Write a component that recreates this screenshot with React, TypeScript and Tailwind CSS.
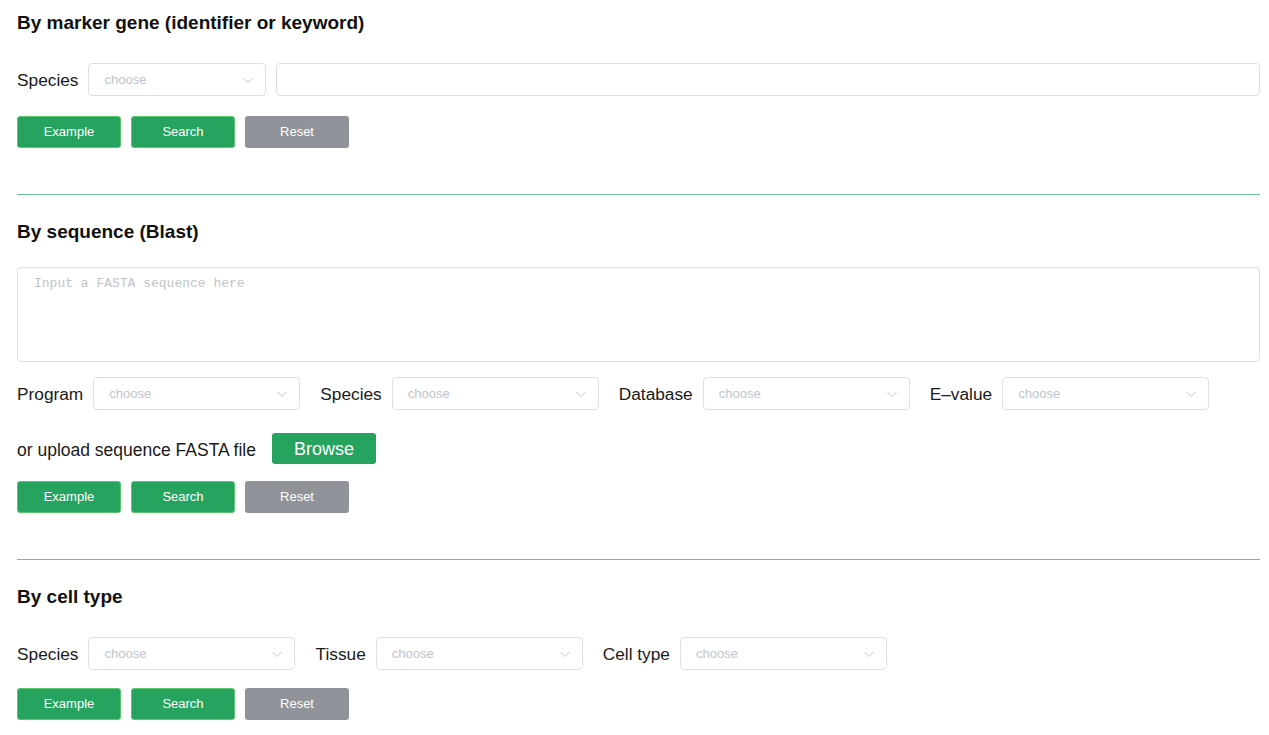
import React from "react";

const Chevron = () => (
  <svg width="12" height="12" viewBox="0 0 12 12" className="text-[#c0c4cc]">
    <path d="M1.5 4 L6 8.5 L10.5 4" fill="none" stroke="currentColor" strokeWidth="1" />
  </svg>
);

const Select = ({ width }: { width: string }) => (
  <div
    className={`${width} h-[33px] flex items-center justify-between border border-[#dcdfe6] rounded-[4px] pl-[15px] pr-[11px] bg-white`}
  >
    <span className="text-[13px] leading-[16px] text-[#c0c4cc]">choose</span>
    <Chevron />
  </div>
);

const Field = ({ label, width = "w-[207px]" }: { label: string; width?: string }) => (
  <div className="flex items-center gap-[10px]">
    <span className="text-[17.3px] leading-[24px] text-[#1a1a1a]">{label}</span>
    <Select width={width} />
  </div>
);

const Buttons = () => (
  <div className="flex gap-[10px]">
    <button className="w-[104px] h-[32px] rounded-[3px] bg-[#26a45f] border border-[#5cc46a] text-white text-[13px]">
      Example
    </button>
    <button className="w-[104px] h-[32px] rounded-[3px] bg-[#26a45f] border border-[#5cc46a] text-white text-[13px]">
      Search
    </button>
    <button className="w-[104px] h-[32px] rounded-[3px] bg-[#909399] text-white text-[13px]">
      Reset
    </button>
  </div>
);

const Heading = ({ children }: { children: React.ReactNode }) => (
  <h2 className="text-[19px] leading-[25px] font-bold text-[#111]">{children}</h2>
);

export default function App() {
  return (
    <div className="bg-white min-h-screen pl-[17px] w-[1260px] font-['Liberation_Sans',Arial,sans-serif]">
      <div className="pt-[10px]">
        <Heading>By marker gene (identifier or keyword)</Heading>
        <div className="mt-[28px] flex items-center gap-[10px]">
          <span className="text-[17.3px] leading-[24px] text-[#1a1a1a]">Species</span>
          <Select width="w-[178px]" />
          <div className="flex-1 h-[33px] border border-[#dcdfe6] rounded-[4px]" />
        </div>
        <div className="mt-[20px]">
          <Buttons />
        </div>
      </div>

      <div className="mt-[46px] border-t border-[#6cc394]" />

      <div className="pt-[24px]">
        <Heading>By sequence (Blast)</Heading>
        <div className="mt-[23px] h-[95px] border border-[#dcdfe6] rounded-[4px] px-[16px] pt-[6px] font-['Liberation_Mono',monospace] text-[13px] leading-[20px] text-[#c0c4cc]">
          Input a FASTA sequence here
        </div>
        <div className="mt-[15px] flex items-center gap-[20px]">
          <Field label="Program" />
          <Field label="Species" />
          <Field label="Database" />
          <Field label="E–value" />
        </div>
        <div className="mt-[23px] flex items-center gap-[16px]">
          <span className="text-[17.5px] leading-[24px] text-[#1a1a1a] pt-[3px]">
            or upload sequence FASTA file
          </span>
          <button className="w-[104px] h-[31px] rounded-[3px] bg-[#26a45f] text-white text-[18px] leading-[22px]">
            Browse
          </button>
        </div>
        <div className="mt-[17px]">
          <Buttons />
        </div>
      </div>

      <div className="mt-[46px] border-t border-[#6cc394]" />

      <div className="pt-[24px] pb-[14px]">
        <Heading>By cell type</Heading>
        <div className="mt-[28px] flex items-center gap-[20px]">
          <Field label="Species" />
          <Field label="Tissue" />
          <Field label="Cell type" />
        </div>
        <div className="mt-[18px]">
          <Buttons />
        </div>
      </div>
    </div>
  );
}
